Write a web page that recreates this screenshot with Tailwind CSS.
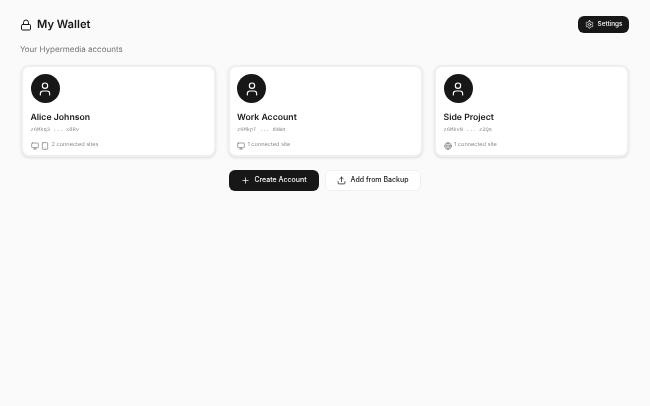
<!DOCTYPE html>
<html lang="en">
<head>
  <meta charset="UTF-8" />
  <title>My Wallet</title>
  <script src="https://cdn.jsdelivr.net/npm/@tailwindcss/browser@4"></script>
</head>
<body class="bg-[#fafafa] font-['Inter',sans-serif] text-[#171717] h-[406px] overflow-hidden antialiased [text-rendering:geometricPrecision]">
  <div class="px-5 pt-4 will-change-transform">

    <!-- Header -->
    <div class="flex items-center justify-between h-[17px]">
      <div class="flex items-center gap-[5px]">
        <svg class="w-[12px] h-[12px]" viewBox="0 0 24 24" fill="none" stroke="currentColor" stroke-width="2" stroke-linecap="round" stroke-linejoin="round">
          <rect x="3" y="11" width="18" height="11" rx="2"></rect>
          <path d="M7 11V7a5 5 0 0 1 10 0v4"></path>
        </svg>
        <h1 class="text-[11.2px] leading-none font-semibold">My Wallet</h1>
      </div>
      <button class="flex items-center justify-center gap-[4px] w-[51px] h-[17px] mr-px rounded-[6px] bg-[#171717] text-[#fafafa] text-[6.4px] font-medium">
        <svg class="w-[9px] h-[9px]" viewBox="0 0 24 24" fill="none" stroke="currentColor" stroke-width="2" stroke-linecap="round" stroke-linejoin="round">
          <path d="M12.22 2h-.44a2 2 0 0 0-2 2v.18a2 2 0 0 1-1 1.73l-.43.25a2 2 0 0 1-2 0l-.15-.08a2 2 0 0 0-2.73.73l-.22.38a2 2 0 0 0 .73 2.73l.15.1a2 2 0 0 1 1 1.72v.51a2 2 0 0 1-1 1.74l-.15.09a2 2 0 0 0-.73 2.73l.22.38a2 2 0 0 0 2.73.73l.15-.08a2 2 0 0 1 2 0l.43.25a2 2 0 0 1 1 1.73V20a2 2 0 0 0 2 2h.44a2 2 0 0 0 2-2v-.18a2 2 0 0 1 1-1.73l.43-.25a2 2 0 0 1 2 0l.15.08a2 2 0 0 0 2.73-.73l.22-.39a2 2 0 0 0-.73-2.73l-.15-.08a2 2 0 0 1-1-1.74v-.5a2 2 0 0 1 1-1.74l.15-.09a2 2 0 0 0 .73-2.73l-.22-.38a2 2 0 0 0-2.73-.73l-.15.08a2 2 0 0 1-2 0l-.43-.25a2 2 0 0 1-1-1.73V4a2 2 0 0 0-2-2z"></path>
          <circle cx="12" cy="12" r="3"></circle>
        </svg>
        Settings
      </button>
    </div>

    <p class="mt-[10px] text-[8px] leading-[12px] text-[#737373]">Your Hypermedia accounts</p>

    <!-- Accounts -->
    <div class="mt-[10px] mx-px grid grid-cols-3 gap-[11.5px]">
      <div class="h-[92px] bg-white rounded-[8px] border-2 border-[#efefef] shadow-sm px-[7.5px] pt-[7px]">
        <div class="w-[29px] h-[29px] rounded-full bg-[#171717] flex items-center justify-center text-white">
          <svg class="w-[16px] h-[16px]" viewBox="0 0 24 24" fill="none" stroke="currentColor" stroke-width="1.7" stroke-linecap="round" stroke-linejoin="round">
            <circle cx="12" cy="7" r="4"></circle>
            <path d="M19 21v-2a4 4 0 0 0-4-4H9a4 4 0 0 0-4 4v2"></path>
          </svg>
        </div>
        <h2 class="mt-[8px] text-[8.7px] leading-[14px] font-semibold">Alice Johnson</h2>
        <p class="mt-[1px] font-['Liberation_Mono',monospace] text-[5.4px] leading-[9px] text-[#8a8a8a]">z6Mkq3 ... x8Rv</p>
        <div class="mt-[6px] flex items-center gap-[2.5px] text-[#737373]">
          <svg class="w-[8px] h-[8px]" viewBox="0 0 24 24" fill="none" stroke="currentColor" stroke-width="2" stroke-linecap="round" stroke-linejoin="round">
            <rect x="2" y="3" width="20" height="14" rx="2"></rect>
            <path d="M8 21h8M12 17v4"></path>
          </svg>
          <svg class="w-[8px] h-[8px]" viewBox="0 0 24 24" fill="none" stroke="currentColor" stroke-width="2" stroke-linecap="round" stroke-linejoin="round">
            <rect x="4" y="2" width="16" height="20" rx="2"></rect>
            <path d="M12 18h.01"></path>
          </svg>
          <span class="text-[5.6px] leading-[9px] text-[#8a8a8a]">2 connected sites</span>
        </div>
      </div>

      <div class="h-[92px] bg-white rounded-[8px] border-2 border-[#efefef] shadow-sm px-[7.5px] pt-[7px]">
        <div class="w-[29px] h-[29px] rounded-full bg-[#171717] flex items-center justify-center text-white">
          <svg class="w-[16px] h-[16px]" viewBox="0 0 24 24" fill="none" stroke="currentColor" stroke-width="1.7" stroke-linecap="round" stroke-linejoin="round">
            <circle cx="12" cy="7" r="4"></circle>
            <path d="M19 21v-2a4 4 0 0 0-4-4H9a4 4 0 0 0-4 4v2"></path>
          </svg>
        </div>
        <h2 class="mt-[8px] text-[8.7px] leading-[14px] font-semibold">Work Account</h2>
        <p class="mt-[1px] font-['Liberation_Mono',monospace] text-[5.4px] leading-[9px] text-[#8a8a8a]">z6MkpT ... d4Wn</p>
        <div class="mt-[6px] flex items-center gap-[2.5px] text-[#737373]">
          <svg class="w-[8px] h-[8px]" viewBox="0 0 24 24" fill="none" stroke="currentColor" stroke-width="2" stroke-linecap="round" stroke-linejoin="round">
            <rect x="2" y="3" width="20" height="14" rx="2"></rect>
            <path d="M8 21h8M12 17v4"></path>
          </svg>
          <span class="text-[5.6px] leading-[9px] text-[#8a8a8a]">1 connected site</span>
        </div>
      </div>

      <div class="h-[92px] bg-white rounded-[8px] border-2 border-[#efefef] shadow-sm px-[7.5px] pt-[7px]">
        <div class="w-[29px] h-[29px] rounded-full bg-[#171717] flex items-center justify-center text-white">
          <svg class="w-[16px] h-[16px]" viewBox="0 0 24 24" fill="none" stroke="currentColor" stroke-width="1.7" stroke-linecap="round" stroke-linejoin="round">
            <circle cx="12" cy="7" r="4"></circle>
            <path d="M19 21v-2a4 4 0 0 0-4-4H9a4 4 0 0 0-4 4v2"></path>
          </svg>
        </div>
        <h2 class="mt-[8px] text-[8.7px] leading-[14px] font-semibold">Side Project</h2>
        <p class="mt-[1px] font-['Liberation_Mono',monospace] text-[5.4px] leading-[9px] text-[#8a8a8a]">z6MkvN ... z2Qs</p>
        <div class="mt-[6px] flex items-center gap-[2.5px] text-[#737373]">
          <svg class="w-[8px] h-[8px]" viewBox="0 0 24 24" fill="none" stroke="currentColor" stroke-width="2" stroke-linecap="round" stroke-linejoin="round">
            <circle cx="12" cy="12" r="10"></circle>
            <path d="M2 12h20M12 2a15 15 0 0 1 0 20M12 2a15 15 0 0 0 0 20"></path>
          </svg>
          <span class="text-[5.6px] leading-[9px] text-[#8a8a8a]">1 connected site</span>
        </div>
      </div>
    </div>

    <!-- Actions -->
    <div class="mt-[13px] flex justify-center gap-[6px]">
      <button class="flex items-center justify-center gap-[4px] w-[90px] h-[21px] rounded-[6px] bg-[#171717] text-[#fafafa] text-[7px] font-medium">
        <svg class="w-[9px] h-[9px]" viewBox="0 0 24 24" fill="none" stroke="currentColor" stroke-width="2" stroke-linecap="round" stroke-linejoin="round">
          <path d="M5 12h14M12 5v14"></path>
        </svg>
        Create Account
      </button>
      <button class="flex items-center justify-center gap-[4px] w-[96px] h-[21px] rounded-[6px] bg-white border border-[#f0f0f0] text-[#171717] text-[7px] font-medium">
        <svg class="w-[9px] h-[9px]" viewBox="0 0 24 24" fill="none" stroke="currentColor" stroke-width="2" stroke-linecap="round" stroke-linejoin="round">
          <path d="M21 15v4a2 2 0 0 1-2 2H5a2 2 0 0 1-2-2v-4"></path>
          <path d="M17 8l-5-5-5 5M12 3v12"></path>
        </svg>
        Add from Backup
      </button>
    </div>
  </div>
</body>
</html>
